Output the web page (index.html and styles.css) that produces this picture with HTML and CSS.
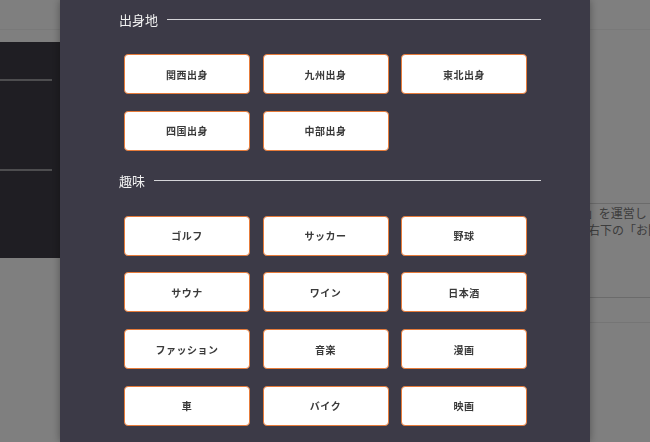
FILE: index.html
```html
<!DOCTYPE html>
<html lang="ja">
<head>
  <meta charset="UTF-8" />
  <meta name="viewport" content="width=device-width, initial-scale=1.0"/>
  <title>プロフィール設定</title>
  <link rel="stylesheet" href="styles.css">
</head>
<body>
  <header class="site-header"></header>

  <div class="page">
    <aside class="side-nav">
      <ul>
        <li class="nav-item short"></li>
        <li class="nav-item tall"></li>
        <li class="nav-item"></li>
      </ul>
    </aside>

    <main class="content">
      <section class="notice">
        <p>いつもご利用いただきありがとうございます。本サービスは弊社が「ミートアップ・サロン」を運営し<br>ご不明な点やご要望などがございましたら、お気軽にお問い合わせください。なお、画面の右下の「お問</p>
      </section>
      <div class="notice-foot"></div>
    </main>
  </div>

  <div class="overlay"></div>

  <div class="modal">
    <section class="tag-group">
      <h2 class="tag-title">出身地</h2>
      <div class="tag-grid">
        <button class="tag">関西出身</button>
        <button class="tag">九州出身</button>
        <button class="tag">東北出身</button>
        <button class="tag">四国出身</button>
        <button class="tag">中部出身</button>
      </div>
    </section>

    <section class="tag-group">
      <h2 class="tag-title">趣味</h2>
      <div class="tag-grid">
        <button class="tag">ゴルフ</button>
        <button class="tag">サッカー</button>
        <button class="tag">野球</button>
        <button class="tag">サウナ</button>
        <button class="tag">ワイン</button>
        <button class="tag">日本酒</button>
        <button class="tag">ファッション</button>
        <button class="tag">音楽</button>
        <button class="tag">漫画</button>
        <button class="tag">車</button>
        <button class="tag">バイク</button>
        <button class="tag">映画</button>
      </div>
    </section>
  </div>
</body>
</html>
```

FILE: styles.css
```css
:root {
  --panel: #3c3a47;
  --accent: #e67b3a;
  --tag-text: #3a3a3a;
  --side: #3e3c46;
}

body {
  font-family: "Noto Sans CJK JP", "Noto Sans", sans-serif;
  margin: 0;
  padding: 0;
  background-color: #fff;
  color: #333;
  overflow: hidden;
  height: 442px;
}

.site-header {
  height: 29px;
  border-bottom: 1px solid #f2f2f2;
  background-color: #fff;
}

.page {
  display: flex;
  padding-top: 12px;
}

.side-nav {
  flex: 0 0 64px;
  height: 216px;
  background-color: var(--side);
}

.side-nav ul {
  list-style: none;
  margin: 0;
  padding: 0;
}

.nav-item {
  margin-right: 12px;
  height: 37px;
  border-bottom: 2px solid #9a9a9e;
}

.nav-item.tall {
  height: 88px;
}

.nav-item:last-child {
  border-bottom: none;
}

.content {
  flex: 1;
  min-width: 0;
  overflow: hidden;
  padding: 161px 0 0 32px;
}

.notice {
  border-top: 1px solid #d6d6d6;
  height: 93px;
  border-bottom: 1px solid #d6d6d6;
}

.notice p {
  margin: 0;
  font-size: 12px;
  line-height: 17px;
  white-space: nowrap;
  color: #7a7a7a;
  text-spacing-trim: space-all;
}

.notice-foot {
  height: 24px;
  border-bottom: 1px solid #eaeaea;
}

.overlay {
  position: fixed;
  inset: 0;
  background-color: rgba(0, 0, 0, 0.5);
}

.modal {
  position: fixed;
  top: 0;
  left: 60px;
  width: 530px;
  height: 100%;
  box-sizing: border-box;
  padding: 9px 49px 0 59px;
  background-color: var(--panel);
  box-shadow: 0 0 8px rgba(0, 0, 0, 0.35);
}

.tag-group {
  margin-bottom: 20px;
}

.tag-title {
  display: flex;
  align-items: center;
  gap: 9px;
  height: 20px;
  margin: 0;
  font-size: 13px;
  font-weight: normal;
  color: #f2f2f2;
}

.tag-title::after {
  content: "";
  flex: 1;
  height: 1px;
  background-color: #d4d4d8;
}

.tag-grid {
  display: grid;
  grid-template-columns: repeat(3, 126px);
  gap: 16.7px 12.5px;
  margin: 25px 0 0 5px;
}

.tag {
  height: 40px;
  box-sizing: border-box;
  background-color: #fff;
  border: 1px solid var(--accent);
  border-radius: 4px;
  font: inherit;
  font-size: 10px;
  font-weight: bold;
  letter-spacing: 0.5px;
  color: var(--tag-text);
  cursor: pointer;
}
```
